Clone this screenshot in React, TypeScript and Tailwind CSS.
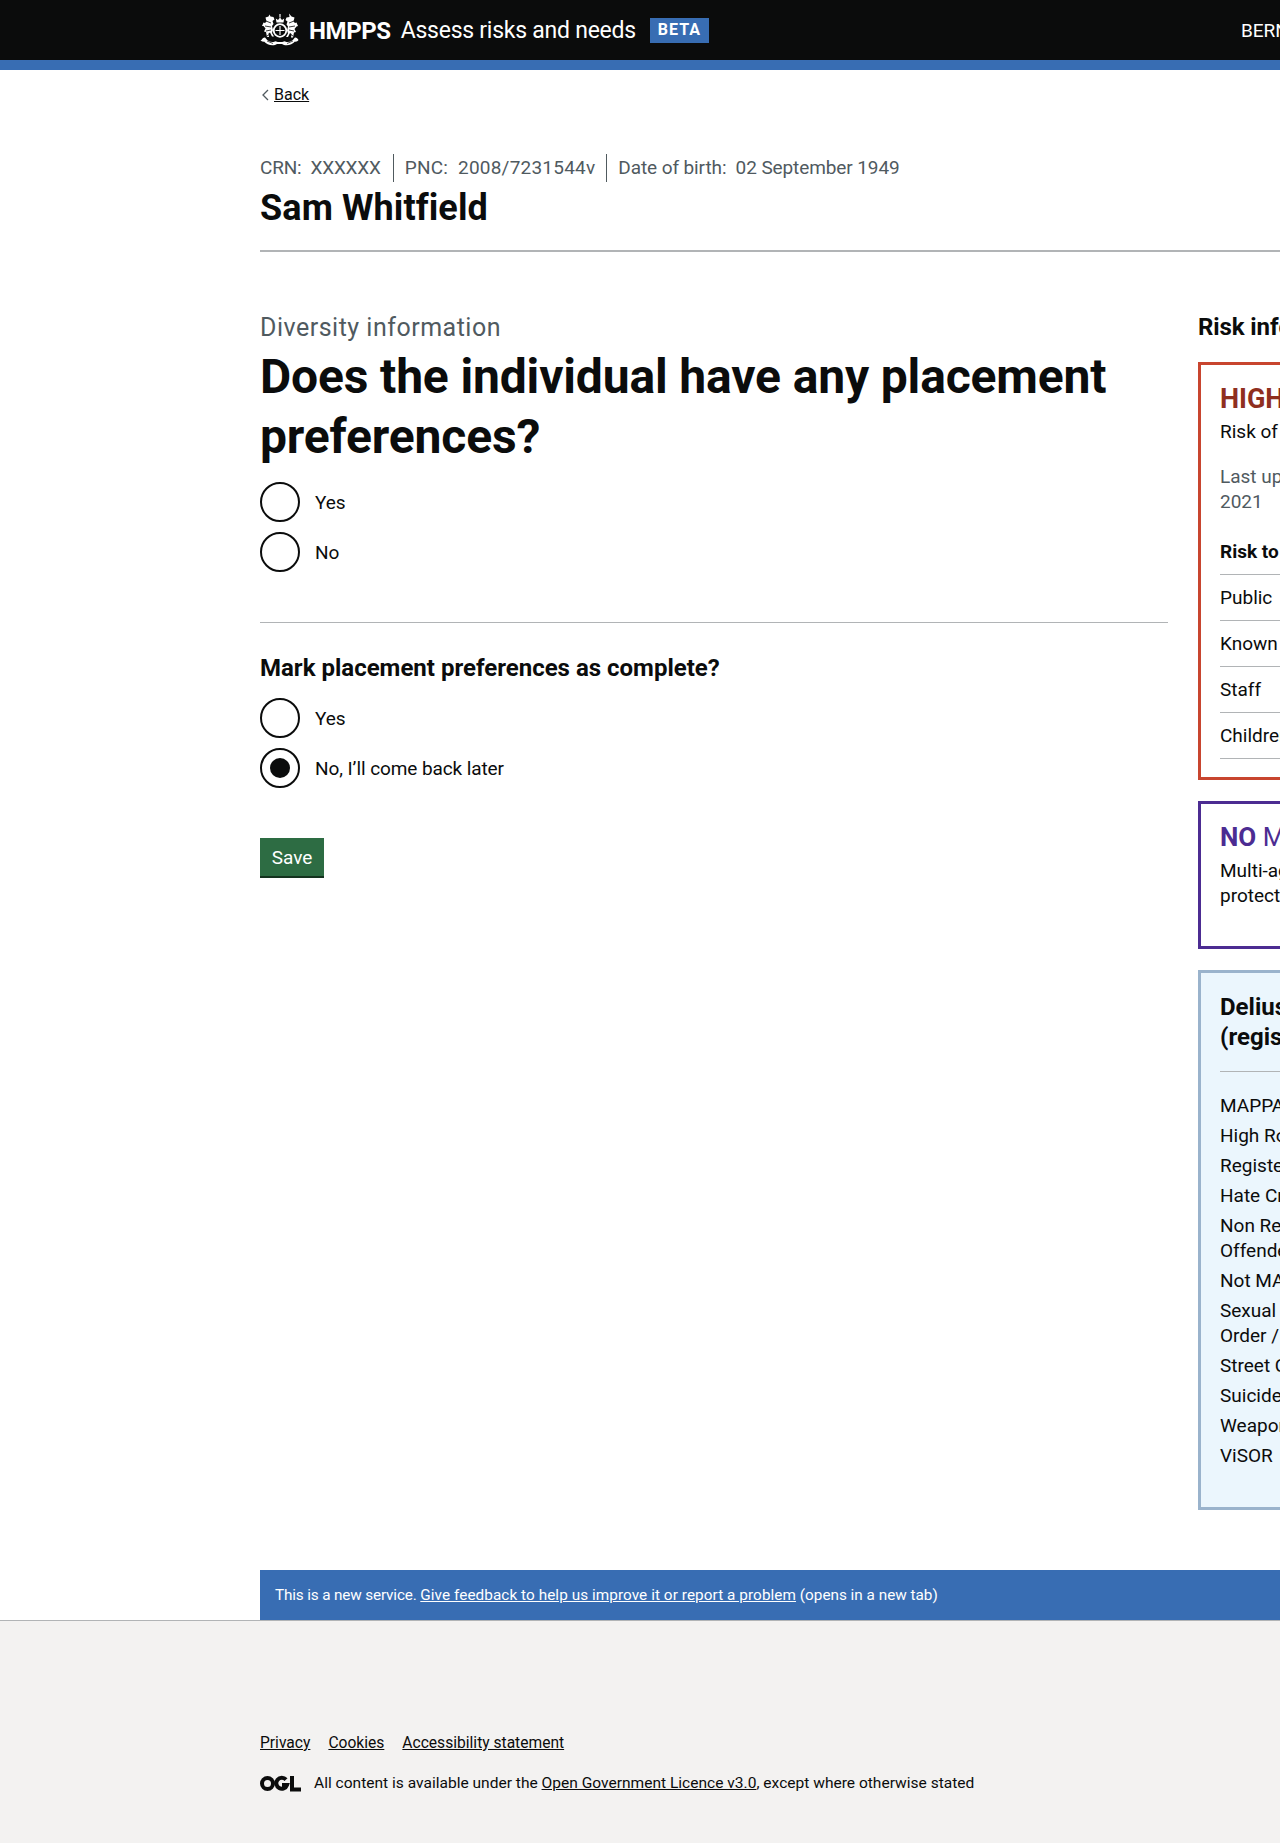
import React from "react";

const FONT = "font-['Roboto','Liberation_Sans',sans-serif]";

function Crest() {
  return (
    <svg width="40" height="34" viewBox="0 0 40 34" fill="#fff" aria-hidden="true" className="shrink-0">
      <circle cx="20" cy="17.500" r="6.300" fill="none" stroke="#fff" strokeWidth="1.800" />
      <path d="M20 13v9M15.500 17.500h9" stroke="#fff" strokeWidth="1.100" />
      <path d="M16.500 9.500l-.7-4 2.200 1.500L20 4.500 22 7l2.200-1.500-.7 4z" />
      <rect x="19.400" y="1" width="1.200" height="3.500" />
      <path d="M5.500 4.500l3-1 1-2 1 2 3 .5 1 2.500-2 1.500 1 3-1.500 2 1 4-1 3 2 3.500h-2l-2-4-1.500 1 .5 3.500H7l-1-5-2-.5 1.500-3-2-2.500L2 13l1.500-3.500L5 10l1.500-1.500z" />
      <path d="M34.500 4.500l-3-1-2.500-3 .5 3.500-3 .5-1 2.500 2 1.500-1 3 1.500 2-1 4 1 3-2 3.500h2l2-4 1.500 1-.5 3.500H33l1-5 2-.5-1.500-3 2-2.500L38 13l-1.500-3.500L35 10l-1.500-1.500z" />
      <path d="M6 8l5 2M5 13l6 1M6 18l5-1M7 23l3-2M34 8l-5 2M35 13l-6 1M34 18l-5-1M33 23l-3-2" stroke="#0b0c0c" strokeWidth="0.800" />
      <path d="M1.500 27c1-2 3-3 4-2 2 3 5 4.500 8 4l2-.8c3 1.200 6 1.200 9 0l2 .8c3 .5 6-1 8-4 1-1 3 0 4 2-1 1.500-2.500 2-3.500 1.500-2.500 3-7 4.500-11 3.500l-2-1h-5l-2 1c-4 1-8.500-.5-11-3.500-1 .5-2.500 0-3.500-1.500z" />
      <path d="M7 28l6 2.500M33 28l-6 2.500" stroke="#0b0c0c" strokeWidth="0.700" />
    </svg>
  );
}

function Ogl() {
  return (
    <svg width="41" height="17" viewBox="0 0 41 17" fill="none" aria-hidden="true" className="shrink-0">
      <circle cx="7.500" cy="8.500" r="5.500" stroke="#0b0c0c" strokeWidth="4" />
      <path d="M26 4.600a5.500 5.500 0 1 0 1 5.400h-5" stroke="#0b0c0c" strokeWidth="4" />
      <path d="M32 1v13.500h9" stroke="#0b0c0c" strokeWidth="4" />
    </svg>
  );
}

function Radio({ label, checked, last }: { label: string; checked?: boolean; last?: boolean }) {
  return (
    <div className={last ? "flex items-center h-10" : "flex items-center h-10 mb-2.5"}>
      <span className="w-10 h-10 rounded-full border-2 border-[#0b0c0c] flex items-center justify-center shrink-0 bg-white">
        {checked && <span className="w-5 h-5 rounded-full bg-[#0b0c0c]" />}
      </span>
      <span className="ml-[15px] text-[19px] leading-[25px] text-[#0b0c0c] tracking-[-0.1px]">{label}</span>
    </div>
  );
}

const Row = ({ children }: { children: React.ReactNode }) => (
  <div className="border-b border-[#b1b4b6] h-[46px] pt-[2px] flex items-center text-[19px] text-[#0b0c0c]">{children}</div>
);

export default function App() {
  return (
    <div className={`${FONT} w-[1280px] h-[1843px] overflow-hidden flex flex-col bg-white text-[#0b0c0c]`}>
      <header className="bg-[#0b0c0c] h-[70px] border-b-[10px] border-[#386db3] shrink-0 flex items-center pl-[260px] whitespace-nowrap">
        <Crest />
        <span className="ml-[9px] mt-[2px] text-[24px] font-bold text-white tracking-[-0.4px]">HMPPS</span>
        <span className="ml-[10px] mt-[2px] text-[23px] text-white tracking-[-0.25px]">Assess risks and needs</span>
        <span className="ml-[14px] w-[59px] h-[25px] shrink-0 flex items-center justify-center bg-[#386db3] text-white font-bold text-[16px] tracking-[1px]">BETA</span>
        <span className="ml-[532px] mt-[2px] text-white text-[19px]">BERNARD</span>
      </header>

      <div className="pl-[260px] w-[1500px] flex-1 flex flex-col">
        <a className="mt-[15px] flex items-center text-[16px] leading-5 h-5">
          <svg width="10" height="14" viewBox="0 0 10 14" fill="none" className="mr-[4px]"><path d="M8 2L3 7l5 5" stroke="#505a5f" strokeWidth="1.300" /></svg>
          <span className="underline">Back</span>
        </a>

        <div className="mt-[51px] flex items-center text-[19px] text-[#505a5f] h-6 whitespace-nowrap">
          <span className="pr-[12px] border-r border-[#505a5f] tracking-[-0.2px]">CRN:&nbsp; XXXXXX</span>
          <span className="px-[11px] border-r border-[#505a5f] tracking-[0.22px]">PNC:&nbsp; 2008/7231544v</span>
          <span className="pl-[11px] tracking-[-0.1px]">Date of birth:&nbsp; 02 September 1949</span>
        </div>
        <h2 className="mt-[6px] text-[36px] leading-[45px] font-bold tracking-[0.1px]">Sam Whitfield</h2>
        <div className="mt-[19px] border-t-2 border-[#b1b4b6]" />

        <div className="flex mt-[60px] items-start">
          <main className="w-[908px] shrink-0">
            <p className="pt-[1px] text-[25px] leading-[30px] text-[#505a5f] tracking-[0.5px]">Diversity information</p>
            <h1 className="mt-[4px] text-[48px] leading-[60px] font-bold tracking-[-0.15px]">Does the individual have any placement preferences?</h1>
            <div className="mt-[15px]">
              <Radio label="Yes" />
              <Radio label="No" last />
            </div>
            <div className="mt-[50px] border-t border-[#b1b4b6]" />
            <p className="mt-[30px] text-[24px] leading-[30px] font-bold">Mark placement preferences as complete?</p>
            <div className="mt-[15px]">
              <Radio label="Yes" />
              <Radio label="No, I’ll come back later" checked last />
            </div>
            <button className="mt-[50px] w-16 h-10 pt-[2px] bg-[#2d6c43] border-b-2 border-[#14331f] text-white text-[19px] flex items-center justify-center">Save</button>
          </main>

          <aside className="ml-[30px] w-[340px] shrink-0">
            <h3 className="text-[24px] leading-[30px] font-bold tracking-[-0.1px]">Risk information</h3>
            <div className="mt-[20px] border-[3px] border-[#c8452f] pl-[19px] pr-[19px] h-[418px]">
              <p className="mt-[19px] text-[27px] leading-[30px] font-bold text-[#8f2f1f]">HIGH RoSH</p>
              <p className="mt-[5px] text-[19px] leading-[25px]">Risk of serious harm</p>
              <p className="mt-[20px] text-[19px] leading-[25px] text-[#505a5f]">Last updated: 12 January<br />2021</p>
              <p className="mt-[25px] text-[19px] leading-[25px] font-bold pb-[10px] border-b border-[#b1b4b6]">Risk to</p>
              <Row>Public</Row>
              <Row>Known adult</Row>
              <Row>Staff</Row>
              <Row>Children</Row>
            </div>
            <div className="mt-[21px] border-[3px] border-[#4c2c92] pl-[19px] pr-[19px] h-[148px]">
              <p className="mt-[18px] text-[26px] leading-[30px]"><span className="font-bold text-[#4c2c92]">NO</span> <span className="text-[#4c2c92]">MAPPA</span></p>
              <p className="mt-[6px] text-[19px] leading-[25px]">Multi-agency public<br />protection arrangements</p>
            </div>
            <div className="mt-[21px] border-[3px] border-[#9ab3cc] bg-[#ebf6fd] pl-[19px] pr-[19px] h-[540px]">
              <p className="mt-[19px] text-[24px] leading-[30px] font-bold">Delius risk flags<br />(registers)</p>
              <div className="mt-[19px] border-t border-[#b1b4b6] pt-[21px] text-[19px] leading-[25px] flex flex-col gap-[5px]">
                <span>MAPPA</span>
                <span>High RoSH</span>
                <span>Registered Sex Offender</span>
                <span>Hate Crime</span>
                <span>Non Registered Sex<br />Offender</span>
                <span>Not MAPPA eligible</span>
                <span>Sexual Harm Prevention<br />Order / Interim</span>
                <span>Street Crime</span>
                <span>Suicide / Self Harm</span>
                <span>Weapons</span>
                <span>ViSOR</span>
              </div>
            </div>
          </aside>
        </div>

        <div className="mt-auto bg-[#386db3] h-[50px] flex items-center pl-[15px] text-[15.3px] text-white whitespace-nowrap">
          <span className="tracking-[-0.15px]">This is a new service.&nbsp;</span><span className="underline tracking-[0.07px]">Give feedback to help us improve it or report a problem</span><span>&nbsp;(opens in a new tab)</span>
        </div>
      </div>

      <footer className="h-[223px] shrink-0 bg-[#f3f2f1] border-t border-[#b1b4b6] pl-[260px]">
        <div className="mt-[112px] flex gap-[18px] text-[15.6px] leading-5 underline">
          <span>Privacy</span><span>Cookies</span><span>Accessibility statement</span>
        </div>
        <div className="mt-[20px] flex items-center text-[15.56px] leading-5">
          <Ogl />
          <span className="ml-[13px]">All content is available under the <span className="underline">Open Government Licence v3.0</span>, except where otherwise stated</span>
        </div>
      </footer>
    </div>
  );
}
